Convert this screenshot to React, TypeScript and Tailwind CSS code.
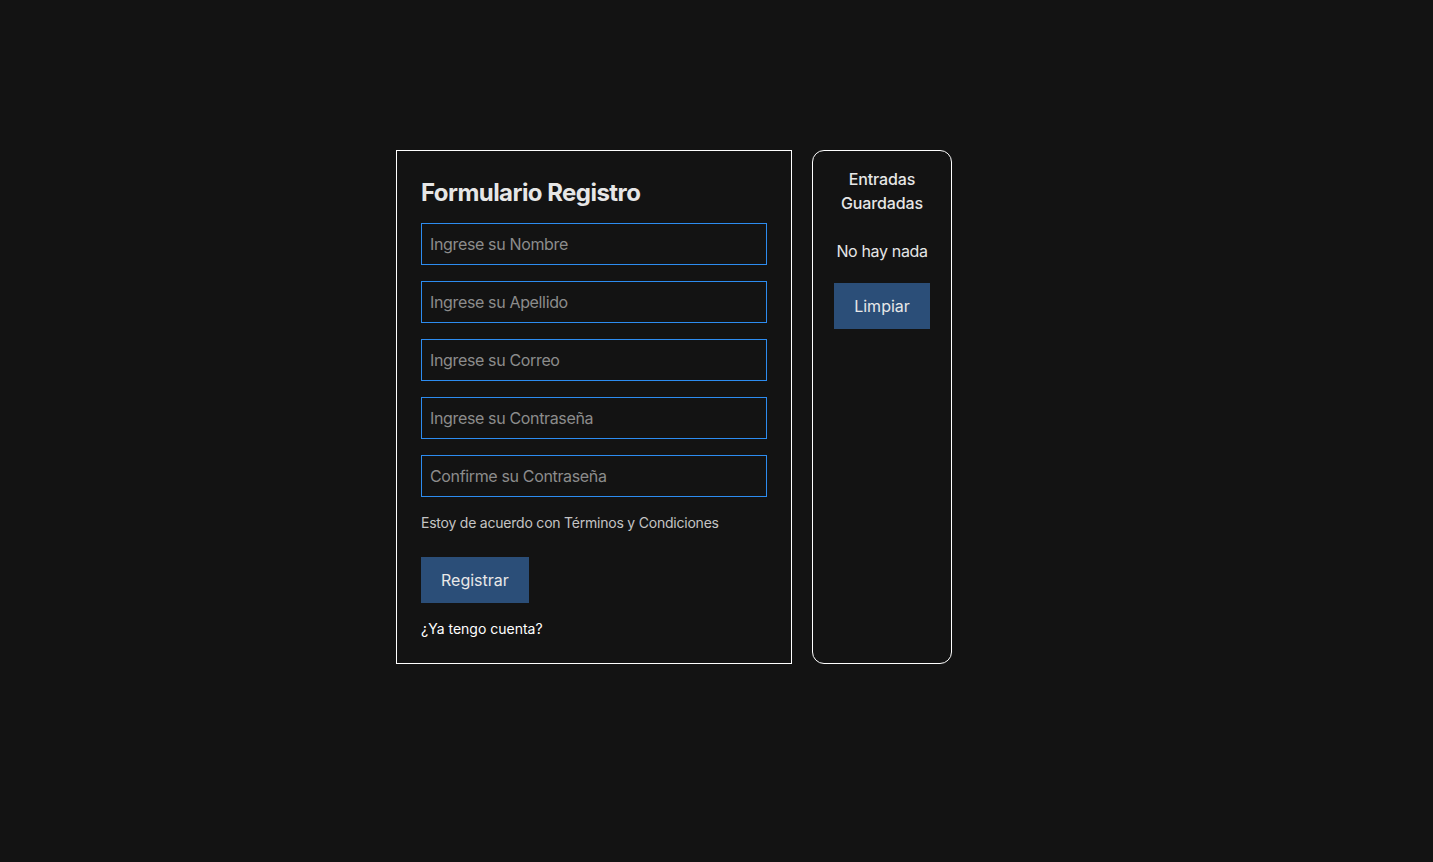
import React from "react";

export default function App() {
  const placeholders = [
    "Ingrese su Nombre",
    "Ingrese su Apellido",
    "Ingrese su Correo",
    "Ingrese su Contraseña",
    "Confirme su Contraseña",
  ];
  return (
    <div
      className="min-h-[862px] w-full bg-[#131313] pt-[150px] pl-[396px]"
      style={{ fontFamily: "Inter, 'Noto Sans', sans-serif" }}
    >
      <div className="flex items-stretch gap-5">
        <div className="flex w-[396px] h-[514px] flex-col border border-white px-6 pt-[26px] pb-6">
          <h2 className="text-[24px] font-bold leading-8 tracking-[-0.55px] text-[#e6e6e6]">Formulario Registro</h2>
          <div className="mt-[14px] flex flex-col gap-4">
            {placeholders.map((p) => (
              <input
                key={p}
                placeholder={p}
                className="h-[42px] w-[346px] border border-[#2d8cf0] bg-transparent px-[8px] text-[16px] tracking-[-0.35px] text-white outline-none placeholder:text-[#8c8c8c]"
              />
            ))}
          </div>
          <p className="mt-4 text-[14px] leading-5 tracking-[-0.22px] text-[#c4c4c4]">
            Estoy de acuerdo con Términos y Condiciones
          </p>
          <div className="mt-6">
            <button className="h-[46px] bg-[#2b4e78] px-5 text-[16px] leading-6 text-[#e8e8e8]">
              Registrar
            </button>
          </div>
          <p className="mt-4 text-[14px] leading-5 text-white">¿Ya tengo cuenta?</p>
        </div>
        <div className="flex w-[140px] h-[514px] flex-col items-center rounded-xl border border-white pt-4">
          <h3 className="text-center text-[16px] font-medium leading-6 tracking-[-0.1px] text-[#e6e6e6]">
            Entradas
            <br />
            Guardadas
          </h3>
          <p className="mt-6 text-[16px] leading-6 tracking-[-0.35px] text-[#e6e6e6]">No hay nada</p>
          <button className="mt-5 h-[46px] w-[96px] bg-[#2b4e78] text-[16px] leading-6 text-[#e8e8e8]">
            Limpiar
          </button>
        </div>
      </div>
    </div>
  );
}
